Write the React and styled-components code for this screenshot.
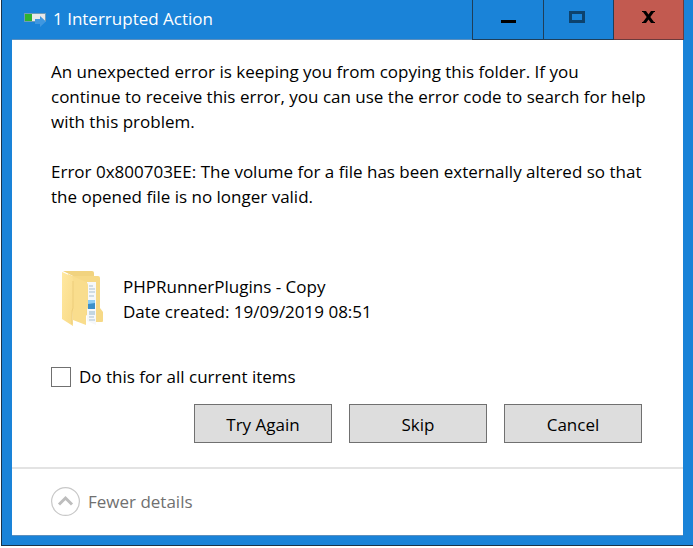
import React, { useState } from "react";
import styled, { createGlobalStyle } from "styled-components";

const App = () => {
  const [applyToAll, setApplyToAll] = useState(false);

  const actions = ["Try Again", "Skip", "Cancel"];

  return (
    <>
      <GlobalStyle />
      <Window>
        <TitleBar>
          <TitleArea>
            <CopyIcon />
            <Title>1 Interrupted Action</Title>
          </TitleArea>
          <Caption>
            <CaptionButton type="button" aria-label="Minimize">
              <svg width="16" height="12" viewBox="0 0 16 12">
                <path d="M1 9h15v3H1z" fill="#000" />
              </svg>
            </CaptionButton>
            <CaptionButton type="button" aria-label="Maximize" disabled>
              <svg width="20" height="12" viewBox="0 0 20 12">
                <path
                  d="M0 0h16v12H0zM3 3v6h10V3z"
                  fill="#0d426d"
                  fillRule="evenodd"
                />
              </svg>
            </CaptionButton>
            <CaptionButton type="button" aria-label="Close" $danger>
              <svg width="13" height="12" viewBox="0 0 13 12">
                <path
                  d="M0 0h4l2.5 3.6L9 0h4v1h-1L8.3 6 12 11h1v1H9L6.5 8.4 4 12H0v-1h1L4.7 6 1 1H0z"
                  fill="#000"
                />
              </svg>
            </CaptionButton>
          </Caption>
        </TitleBar>

        <Client>
          <Body>
            <Message>
              An unexpected error is keeping you from copying this folder. If you
              <br />
              continue to receive this error, you can use the error code to
              search for help
              <br />
              with this problem.
            </Message>
            <Message>
              Error 0x800703EE: The volume for a file has been externally altered
              so that
              <br />
              the opened file is no longer valid.
            </Message>
            <FileRow>
              <FolderIcon />
              <div>
                <FileText>PHPRunnerPlugins - Copy</FileText>
                <FileText>Date created: 19/09/2019 08:51</FileText>
              </div>
            </FileRow>
            <CheckLabel>
              <CheckBox
                type="checkbox"
                checked={applyToAll}
                onChange={(e) => setApplyToAll(e.target.checked)}
              />
              Do this for all current items
            </CheckLabel>
            <Actions>
              {actions.map((action) => (
                <ActionButton key={action} type="button">
                  {action}
                </ActionButton>
              ))}
            </Actions>
          </Body>
          <Footer>
            <DetailsButton type="button">
              <svg width="29" height="29" viewBox="0 0 29 29">
                <circle cx="14.5" cy="14.5" r="13.9" fill="#fff" stroke="#c8c8c8" strokeWidth="1.2" />
                <path d="M8 17.5l6.5-6.5 6.5 6.5" fill="none" stroke="#bdbdbd" strokeWidth="3" />
              </svg>
              Fewer details
            </DetailsButton>
          </Footer>
        </Client>
      </Window>
    </>
  );
};

export default App;

const CopyIcon = () => (
  <svg width="22" height="20" viewBox="0 0 22 20" aria-hidden="true">
    <path d="M0 4h22v9H0z" fill="#6f9cb8" />
    <path d="M1 5h20v7H1z" fill="#e8e8e8" />
    <path d="M1 5h7v7H1z" fill="#2fb32f" />
    <path d="M11 10h5V7l6 5.500-6 5.500v-3h-5z" fill="#3f97e0" />
  </svg>
);

const FolderIcon = () => (
  <svg width="43" height="56" viewBox="0 0 43 56" aria-hidden="true">
    <defs>
      <linearGradient id="flap" x1="0" y1="0" x2="1" y2="1">
        <stop offset="0" stopColor="#ffe8a0" />
        <stop offset="1" stopColor="#f8da88" />
      </linearGradient>
    </defs>
    <path d="M2 0h29q2 0 2 2v4H14z" fill="#f1d37f" />
    <path d="M12 5h25q2 0 2 2v30l3 4v9q0 1-1 1h-7L20 40z" fill="#f6d987" />
    <path d="M26 11h9v43l-9-4z" fill="#f6f8fa" />
    <path d="M28 15h4M28 18h6M28 21h6M28 25h5M28 46h5M28 49h6" stroke="#a9bfcf" />
    <path d="M27 29h7v4h-7z" fill="#8ccdf5" />
    <path d="M27 33l7-1v6h-7z" fill="#3b8fc9" />
    <path d="M28 41h6M28 43h6" stroke="#8fb4cb" />
    <path d="M7 3l18 8q2 1 2 3v23l-2 3v14L12 49z" fill="#f9dd8d" />
    <path d="M1 1l9 4q2 1 2 3v29l-1 3 1 15L1 48z" fill="url(#flap)" />
    <path d="M12 10v27l-1 3v13" fill="none" stroke="#edcd7a" />
  </svg>
);

const GlobalStyle = createGlobalStyle`
  * {
    box-sizing: border-box;
  }
  body {
    margin: 0;
    background: #fff;
    color: #000;
    font-family: "Segoe UI", "Open Sans", "Noto Sans", sans-serif;
    font-size: 17px;
    line-height: 25px;
  }
  button {
    font: inherit;
  }
`;

const Window = styled.main`
  margin-left: 1px;
  padding: 0 10px 9px;
  border: solid #1c3348;
  border-width: 0 0 1px 1px;
  background: #1a83d8;
`;

const TitleBar = styled.header`
  display: flex;
  justify-content: space-between;
  height: 40px;
`;

const TitleArea = styled.div`
  display: flex;
  flex: 1;
  align-items: center;
  gap: 7px;
  padding: 0 0 2px 12px;
  border-bottom: 1px solid #5b8fbe;
`;

const Title = styled.h1`
  margin: 0;
  color: #fff;
  font-size: 17px;
  font-weight: 400;
`;

const Caption = styled.div`
  display: flex;
  margin-right: -1px;
  border-left: 1px solid #1f3e59;
`;

const CaptionButton = styled.button`
  display: grid;
  place-items: center;
  width: 70px;
  padding: 0 0 5px;
  border: solid ${({ $danger }) => ($danger ? "#6b3a3c" : "#1f3e59")};
  border-width: 0 1px 1px 0;
  background: ${({ $danger }) => ($danger ? "#c25a50" : "#1a83d8")};

  &:first-child {
    width: 71px;
  }
`;

const Client = styled.div`
  border-bottom: 1px solid #5b8fbe;
  background: #fff;
`;

const Body = styled.section`
  padding: 19px 21px 24px 39px;
  border-bottom: 2px solid #e3e3e3;
`;

const Message = styled.p`
  margin: 0 0 25px;
`;

const FileRow = styled.div`
  display: flex;
  align-items: center;
  gap: 19px;
  margin: 62px 0 37px;
  padding-left: 10px;
`;

const FileText = styled.div`
  line-height: 25px;
`;

const CheckLabel = styled.label`
  display: flex;
  align-items: center;
  gap: 8px;
  width: fit-content;
`;

const CheckBox = styled.input`
  appearance: none;
  width: 20px;
  height: 20px;
  margin: 0;
  border: 1px solid #707070;
  background: #fff;

  &:checked {
    background: #1a83d8;
  }
`;

const Actions = styled.div`
  display: flex;
  justify-content: flex-end;
  gap: 17px;
  margin-top: 15px;
  padding-right: 20px;
`;

const ActionButton = styled.button`
  width: 138px;
  height: 39px;
  padding: 2px 0 0;
  border: 1px solid #707070;
  background: #ddd;
  color: #000;
`;

const Footer = styled.footer`
  padding: 18px 39px 19px;
`;

const DetailsButton = styled.button`
  display: flex;
  align-items: center;
  gap: 8px;
  padding: 0;
  border: 0;
  background: none;
  color: #707070;
`;
